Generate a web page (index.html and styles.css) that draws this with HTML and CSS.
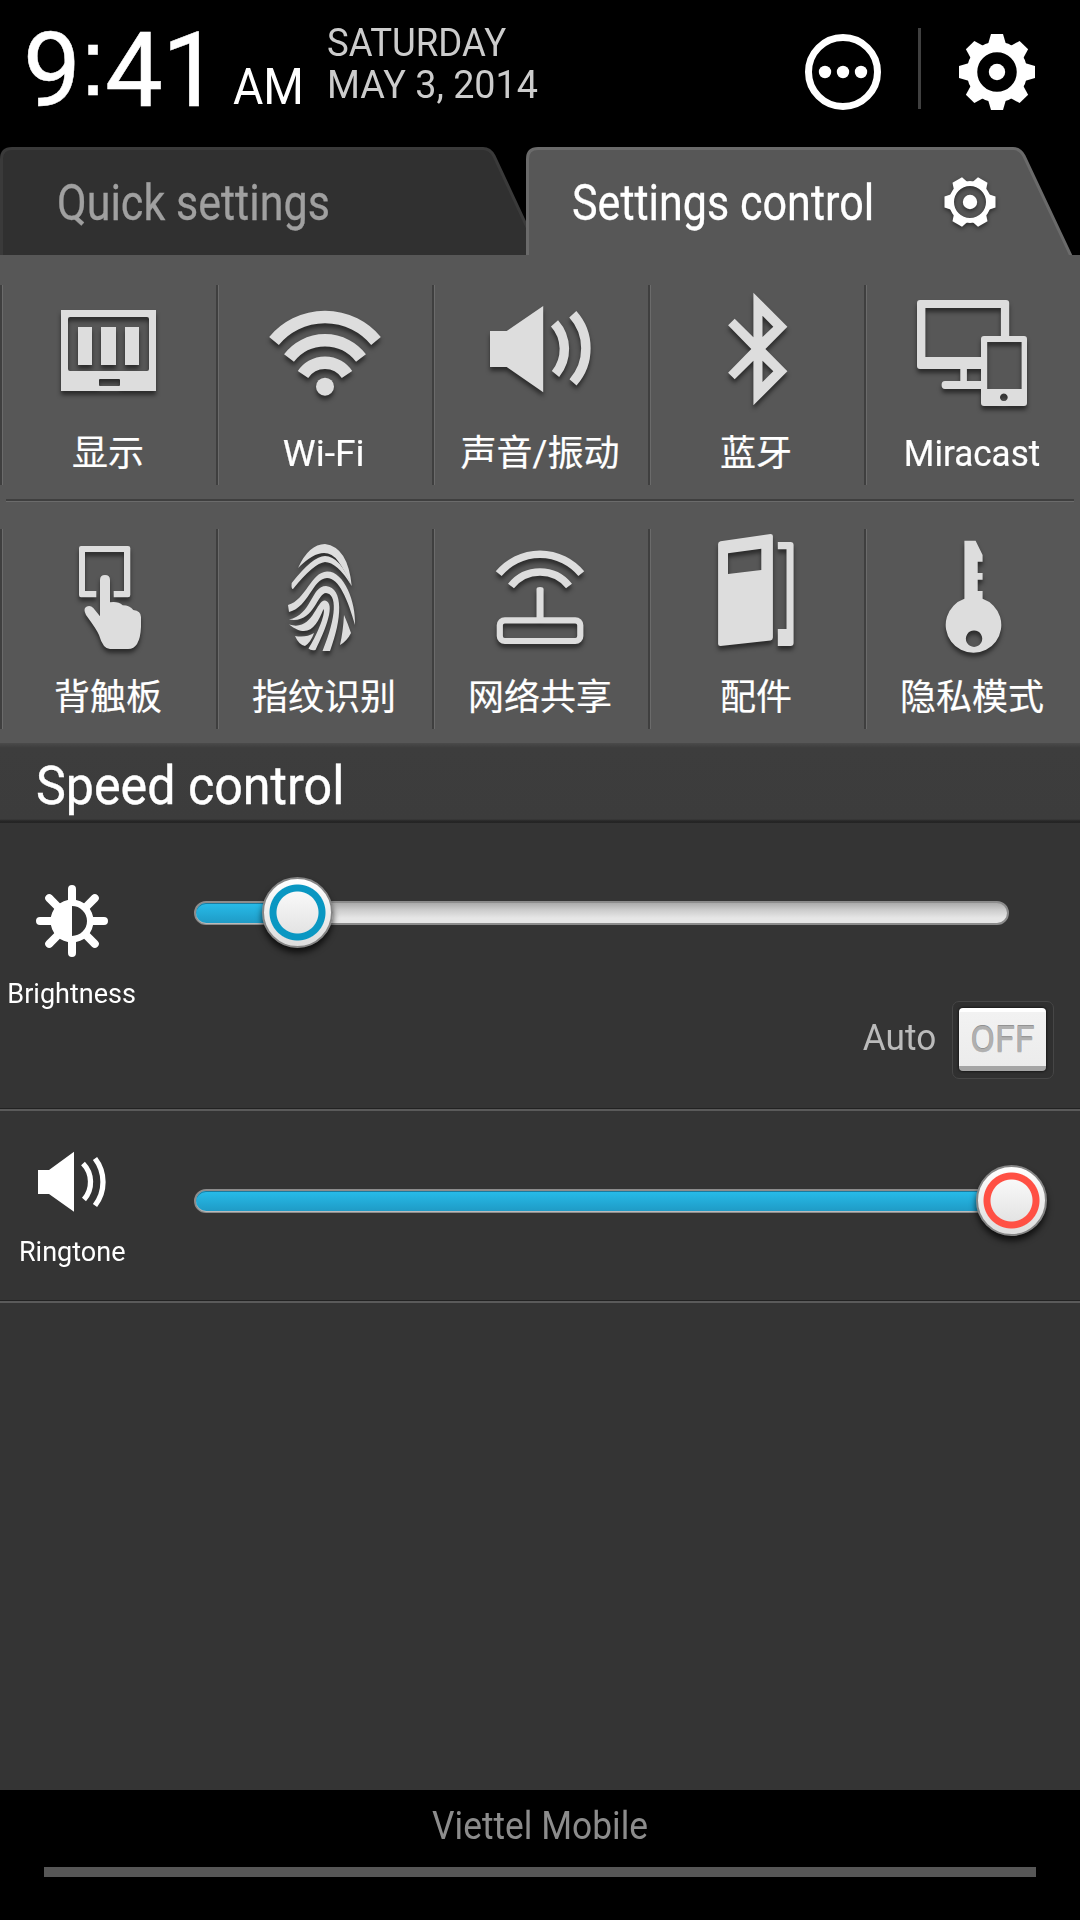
FILE: index.html
```html
<!DOCTYPE html>
<html lang="zh-CN">
<head>
  <meta charset="UTF-8">
  <title>Settings control</title>
  <meta name="viewport" content="width=device-width, initial-scale=1.0">
  <link rel="stylesheet" href="styles.css">
</head>
<body>
  <div class="screen">
    <header class="status">
      <span class="time">9<span class="colon">:</span>41</span>
      <span class="ampm">AM</span>
      <div class="date">
        <span class="day">SATURDAY</span>
        <span class="full-date">MAY 3, 2014</span>
      </div>
      <svg class="more" viewBox="-40 -40 80 80">
        <circle r="34.5" fill="none" stroke="#fff" stroke-width="7"/>
        <circle cx="-18" r="6.2"/><circle r="6.2"/><circle cx="18" r="6.2"/>
      </svg>
      <span class="divider"></span>
      <svg class="gear" viewBox="-40 -40 80 80">
        <defs><path id="tooth" d="M-9.5 -26 L-6 -38 H6 L9.5 -26Z"/></defs>
        <circle r="25" fill="none" stroke="#fff" stroke-width="10.5"/>
        <circle r="8.2"/>
        <use href="#tooth"/>
        <use href="#tooth" transform="rotate(45)"/>
        <use href="#tooth" transform="rotate(90)"/>
        <use href="#tooth" transform="rotate(135)"/>
        <use href="#tooth" transform="rotate(180)"/>
        <use href="#tooth" transform="rotate(225)"/>
        <use href="#tooth" transform="rotate(270)"/>
        <use href="#tooth" transform="rotate(315)"/>
      </svg>
    </header>

    <nav class="tabs">
      <div class="tab tab-quick">
        <svg class="tab-shape" viewBox="0 0 550 108">
          <path d="M1.5 110 V12 Q1.5 1.5 12 1.5 H483 Q490 1.5 494 9 L541 110" fill="#303030" stroke="#3a3a3a" stroke-width="3"/>
        </svg>
        <span class="tab-text">Quick settings</span>
      </div>
      <div class="tab tab-control">
        <svg class="tab-shape" viewBox="0 0 550 108">
          <path d="M1.5 110 V12 Q1.5 1.5 12 1.5 H487 Q494 1.5 498 9 L545.5 110" fill="#575757" stroke="#6a6a6a" stroke-width="3"/>
        </svg>
        <span class="tab-text">Settings control</span>
        <svg class="tab-gear" viewBox="-30 -30 60 60">
          <defs><path id="small-tooth" d="M-8 -18 L-5.5 -25.5 H5.5 L8 -18Z"/></defs>
          <circle r="18.5" fill="none" stroke="#fff" stroke-width="5"/>
          <circle r="7.2"/>
          <use href="#small-tooth" transform="rotate(30)"/>
          <use href="#small-tooth" transform="rotate(90)"/>
          <use href="#small-tooth" transform="rotate(150)"/>
          <use href="#small-tooth" transform="rotate(210)"/>
          <use href="#small-tooth" transform="rotate(270)"/>
          <use href="#small-tooth" transform="rotate(330)"/>
        </svg>
      </div>
    </nav>

    <main class="panel">
      <div class="row">
        <div class="cell">
          <svg class="icon" viewBox="0 0 120 120">
            <path fill-rule="evenodd" d="M13 20H108V101H13Z M22 27Q20 27 20 29V79Q20 81 22 81H99Q101 81 101 79V29Q101 27 99 27Z M52 89Q51 89 51 90V95Q51 96 52 96H71Q72 96 72 95V90Q72 89 71 89Z" class="display-frame"/>
            <path d="M30 37H44V75H30Z M53 37H68V75H53Z M77 37H91V75H77Z"/>
          </svg>
          <span class="label">显示</span>
        </div>
        <div class="cell">
          <svg class="icon" viewBox="0 0 120 120">
            <g class="line" stroke-width="12.5">
              <path d="M10 51A66.2 66.2 0 0 1 112 51"/>
              <path d="M25 68A45.5 45.5 0 0 1 97 68"/>
              <path d="M39 84.5A26.4 26.4 0 0 1 83 84.5"/>
            </g>
            <circle cx="61" cy="96.7" r="9"/>
          </svg>
          <span class="label label-wifi">Wi-Fi</span>
        </div>
        <div class="cell">
          <svg class="icon" viewBox="0 0 120 120">
            <path d="M10 41H26.7L63.2 16V102.3L26.7 77H10Z"/>
            <g class="line" stroke-width="9.5">
              <path d="M74.5 33.3A39 39 0 0 1 75.5 84"/>
              <path d="M92.8 24.3A51 51 0 0 1 93 92.3"/>
            </g>
          </svg>
          <span class="label">声音/振动</span>
        </div>
        <div class="cell">
          <svg class="icon" viewBox="0 0 120 120">
            <path fill-rule="evenodd" d="M57.4 2.7L91.4 36.7L69.4 59L91.4 81.3L57.4 115.3V70.7L38.7 89.3L32.1 82.7L55.3 59L32.1 35.3L38.7 28.7L57.4 47.3Z M66.5 25.7V47L77.3 36.7Z M66.5 70.7V92L77.3 81.3Z"/>
          </svg>
          <span class="label">蓝牙</span>
        </div>
        <div class="cell">
          <svg class="icon" viewBox="0 0 120 120">
            <path d="M8 10H94Q97.2 10 97.2 13V46H88.9V18H13.4V67H69V79H54.9V91H69V99H33Q29.6 99 29.6 95T33 91H48.3V79H8Q5 79 5 76V13Q5 10 8 10Z"/>
            <path fill-rule="evenodd" d="M72 46H112Q115 46 115 49V113Q115 116 112 116H72Q69 116 69 113V49Q69 46 72 46Z M75.2 52V99H109.6V52Z M91.8 103.5a3.8 3.8 0 1 0 .1 0Z"/>
          </svg>
          <span class="label label-cast">Miracast</span>
        </div>
      </div>
      <div class="rule"></div>
      <div class="row">
        <div class="cell">
          <svg class="icon" viewBox="0 0 120 120">
            <path d="M33 12H80Q82.3 12 82.3 14V61Q82.3 63.3 80 63.3H65.7V57H76V18H37V57H48.3V63.3H33Q31 63.3 31 61V14Q31 12 33 12Z"/>
            <path d="M52 82.3V46Q52 41 57 41T62 46V68.3Q70 67 74.7 71.3Q82 71.5 85.3 76Q93 77 93 83V93Q92 115 80 115H62Q55 115 51 101Q49 96 38 81Q35 75 38 73Q42 70.5 45.3 74Z"/>
          </svg>
          <span class="label">背触板</span>
        </div>
        <div class="cell">
          <svg class="icon" viewBox="0 0 120 120">
            <path d="M34 34Q45 10 61 10Q84 13 87.7 52Q80 35 74 27Q60 8 34 34Z"/>
            <path d="M27.7 49Q49 22 61 22Q76 22 87.7 52Q73 28 61 28Q50 29 29 55Q27 55 27.7 49Z"/>
            <path d="M24 71C42 66 47 38 63 37.5C80 37 92 68 91 91C84 66 75 44 63 44C48 45 45 73 25 78Z"/>
            <path d="M25 85.5C48 81 47 52 62 52C80 54 78 85 66 117H58.5C73 82 73 60 62 59C53 59 50 90 25 85.5Z"/>
            <path d="M25 90.5C49 98 52 66 61 66.5C72 69 62 95 51.5 116Q47 117 44.5 114.5C52 103 62 80 59.5 75C53 91 45 106 25 90.5Z"/>
            <path d="M31 102Q42 104 50 99Q47 108 41 112Q35 111 31 102Z"/>
            <path d="M80 81Q84 90 87 99Q83 107 76 111Q79 98 80 81Z"/>
          </svg>
          <span class="label">指纹识别</span>
        </div>
        <div class="cell">
          <svg class="icon" viewBox="0 0 120 120">
            <g class="line">
              <path stroke-width="7.6" d="M18.7 39.7A53.6 53.6 0 0 1 101.3 39.7"/>
              <path stroke-width="7.6" d="M31 52A37 37 0 0 1 89 52"/>
              <rect x="19.8" y="86.3" width="80.5" height="20.7" rx="5" stroke-width="6.2"/>
            </g>
            <path d="M56.5 86V55Q56.5 53 60 53T63.6 55V86Z"/>
          </svg>
          <span class="label">网络共享</span>
        </div>
        <div class="cell">
          <svg class="icon" viewBox="0 0 120 120">
            <path fill-rule="evenodd" d="M24.5 7.3L74.5 0Q76.9 0 76.9 2V103.5Q76.9 106 74.5 106.4L24.5 112Q22.1 112 22.1 110V10Q22.1 7.7 24.5 7.3Z M32 19.3V40L65.3 36V14.7Z"/>
            <path d="M81.8 8H94.5Q97.6 8 97.6 11V109Q97.6 112 94.5 112H81.8V95H90.5V15.3H81.8Z"/>
          </svg>
          <span class="label">配件</span>
        </div>
        <div class="cell">
          <svg class="icon" viewBox="0 0 120 120">
            <path fill-rule="evenodd" d="M52.4 6.7H63.6L70.6 21V27.7H65.7V39H70.6V45.7H65.7V57H70.6V64.7A27.8 27.8 0 1 1 52.4 64.7Z M62 96.5a8.2 8.2 0 1 0 .1 0Z"/>
          </svg>
          <span class="label">隐私模式</span>
        </div>
      </div>
    </main>

    <h1 class="section-title"><span>Speed control</span></h1>

    <section class="control control-brightness">
      <div class="control-name">
        <svg class="control-icon" viewBox="-40 -40 80 80">
          <path fill="none" stroke="#fff" stroke-width="8" stroke-linecap="round" d="M0 -32V-20M0 20V32M-32 0H-20M20 0H32M-22.8 -22.8L-14 -14M14 14L22.8 22.8M22.8 -22.8L14 -14M-14 14L-22.8 22.8"/>
          <path fill-rule="evenodd" d="M0 -21.5A21.5 21.5 0 0 1 0 21.5A21.5 21.5 0 0 1 0 -21.5Z M0 -15V15A15 15 0 0 0 0 -15Z"/>
        </svg>
        <span class="control-label">Brightness</span>
      </div>
      <div class="control-body">
        <div class="slider">
          <div class="fill" style="width: 102px"></div>
          <div class="thumb" style="left: 102px"></div>
        </div>
        <div class="auto">
          <span class="auto-label">Auto</span>
          <div class="toggle"><button class="toggle-btn">OFF</button></div>
        </div>
      </div>
    </section>

    <section class="control control-ringtone">
      <div class="control-name">
        <svg class="control-icon" viewBox="0 0 80 80">
          <path d="M6 28H17L42 9.7V69.7L17 52H6Z"/>
          <g fill="none" stroke="#fff" stroke-width="5.3">
            <path d="M51 21.5A26.6 26.6 0 0 1 52 57.5"/>
            <path d="M63 16.5A38.5 38.5 0 0 1 63 63.5"/>
          </g>
        </svg>
        <span class="control-label">Ringtone</span>
      </div>
      <div class="control-body">
        <div class="slider">
          <div class="fill" style="width: 815px"></div>
          <div class="thumb thumb-max" style="left: 816px"></div>
        </div>
      </div>
    </section>

    <footer class="carrier">
      <span class="carrier-name">Viettel Mobile</span>
      <div class="handle"></div>
    </footer>
  </div>
</body>
</html>
```
FILE: styles.css
```css
* {
  box-sizing: border-box;
}
body {
  margin: 0;
  background: #000;
  font-family: Roboto, "Noto Sans CJK SC", sans-serif;
  color: #fff;
}
.screen {
  width: 1080px;
  height: 1920px;
  display: flex;
  flex-direction: column;
  background: #343434;
  overflow: hidden;
}
svg {
  display: block;
  flex: none;
  fill: #fff;
}
span {
  white-space: nowrap;
}

/* status header */
.status {
  height: 147px;
  flex: none;
  display: flex;
  align-items: flex-start;
  background: #000;
  padding-left: 23px;
}
.time {
  width: 210px;
  height: 104px;
  margin-top: 16px;
  font-size: 103px;
  line-height: 104px;
  letter-spacing: -1px;
  -webkit-text-stroke: 0.5px #fff;
}
/* square dots, raised to the middle of the digits */
.colon {
  font-family: "Liberation Sans", sans-serif;
  font-size: 94px;
  line-height: 1;
  vertical-align: 11px;
}
.ampm {
  width: 93px;
  margin-top: 62px;
  font-size: 50px;
  line-height: 50px;
  transform: scaleX(0.93);
  transform-origin: left;
}
.date {
  width: 477px;
  margin: 22px -1px 0 1px;
  display: flex;
  flex-direction: column;
  align-items: flex-start;
  color: #ccc;
  font-size: 38.5px;
  line-height: 42px;
}
.day {
  transform: scaleX(0.95);
  transform-origin: left;
}
.full-date {
  transform: scaleX(0.98);
  transform-origin: left;
}
.more {
  width: 80px;
  height: 80px;
  margin-top: 32px;
}
.divider {
  width: 3px;
  height: 81px;
  margin: 28px 36px 0 35px;
  background: #404040;
}
.gear {
  width: 80px;
  height: 80px;
  margin-top: 32px;
}

/* tabs */
.tabs {
  height: 108px;
  flex: none;
  display: flex;
  background: #000;
}
.tab {
  position: relative;
  display: flex;
  align-items: flex-start;
}
.tab-quick {
  width: 526px;
  padding-left: 57px;
  color: #a0a0a0;
}
.tab-control {
  width: 554px;
  padding-left: 46px;
}
.tab-shape {
  position: absolute;
  left: 0;
  top: 0;
  width: 550px;
  height: 108px;
}
.tab-text {
  position: relative;
  margin-top: 26px;
  font-size: 50.5px;
  line-height: 60px;
  transform: scaleX(0.853);
  transform-origin: left;
  -webkit-text-stroke: 0.3px;
}
.tab-control .tab-text {
  width: 342px;
}
.tab-gear {
  position: relative;
  width: 60px;
  height: 60px;
  margin: 25px 0 0 26px;
  filter: drop-shadow(0 2px 2px rgba(0, 0, 0, 0.5));
}

/* icon grid */
.panel {
  height: 488px;
  flex: none;
  padding-top: 30px;
  background: #575757;
}
.row {
  height: 200px;
  display: grid;
  grid-template-columns: repeat(5, 216px);
}
.cell {
  display: flex;
  flex-direction: column;
  align-items: center;
  padding-top: 5px;
  background: linear-gradient(90deg, #3f3f3f 2px, #6b6b6b 2px, #6b6b6b 3px, transparent 3px);
}
.icon {
  width: 120px;
  height: 120px;
  fill: #ddd;
  overflow: visible;
  filter: drop-shadow(0 4px 2px rgba(0, 0, 0, 0.5));
}
.line {
  fill: none;
  stroke: #ddd;
}
.label {
  margin-top: 17px;
  font-size: 36px;
  line-height: 54px;
  -webkit-text-stroke: 0.2px #fff;
}
.label-wifi {
  transform: scale(1.03);
}
.label-cast {
  transform: scale(0.975, 1.03);
}
.rule {
  height: 3px;
  margin: 14px 6px 27px;
  background: linear-gradient(#3f3f3f 2px, #6b6b6b 2px);
}

/* sliders */
.section-title {
  height: 80px;
  flex: none;
  margin: 0;
  padding: 12px 0 0 36px;
  font-size: 53px;
  font-weight: 400;
  line-height: 62px;
  background: linear-gradient(#4a4a4a, #3d3d3d 5px, #3c3c3c 76px, #262626 78px, #242424);
}
.section-title span {
  display: inline-block;
  transform: scaleX(0.947);
  transform-origin: left;
  -webkit-text-stroke: 0.4px #fff;
}
.control {
  flex: none;
  display: flex;
  border-bottom: 2px solid #5a5a5a;
  box-shadow: inset 0 -1px #222;
}
.control-brightness {
  height: 288px;
}
.control-ringtone {
  height: 192px;
}
.control-name {
  width: 144px;
  display: flex;
  flex-direction: column;
  align-items: center;
  padding-top: 58px;
}
.control-ringtone .control-name {
  padding-top: 31px;
}
.control-icon {
  width: 80px;
  height: 80px;
}
.control-label {
  margin-top: 16px;
  font-size: 28px;
  line-height: 34px;
  transform: scaleX(0.965);
}
.control-ringtone .control-label {
  margin-top: 13px;
}
.control-body {
  flex: 1;
  padding: 78px 26px 0 50px;
}
.slider {
  position: relative;
  width: 815px;
  height: 24px;
  border: 2px solid #8c8c8c;
  border-radius: 12px;
  background: linear-gradient(#aaa, #ccc 35%, #e6e6e6 75%, #e6e6e6);
}
.fill {
  height: 20px;
  max-width: 100%;
  border-radius: 10px 0 0 10px;
  background: linear-gradient(#27bcea, #1f9bc6);
  box-shadow: inset 0 1px #187ba0, 0 1px #bbb;
}
.thumb {
  position: absolute;
  top: 9px;
  width: 71px;
  height: 71px;
  margin: -35px 0 0 -36px;
  border: 2px solid #858585;
  border-radius: 50%;
  background:
    radial-gradient(circle, transparent 20.5px, #0a97c2 21.5px, #0a97c2 27.5px, transparent 28.5px),
    linear-gradient(#fff, #ddd);
  box-shadow: 0 5px 6px rgba(0, 0, 0, 0.7);
}
.thumb-max {
  background:
    radial-gradient(circle, transparent 20.5px, #ff5044 21.5px, #ff5044 27.5px, transparent 28.5px),
    linear-gradient(#fff, #ddd);
}
.auto {
  display: flex;
  justify-content: flex-end;
  align-items: flex-start;
  margin-top: 76px;
}
.auto-label {
  margin: 15px 16px 0 0;
  font-size: 37px;
  line-height: 44px;
  color: #bbb;
  transform: scaleX(0.95);
  transform-origin: right;
}
.toggle {
  width: 102px;
  height: 78px;
  padding: 6px;
  border: 1px solid #464646;
  border-radius: 7px;
  background: #303030;
}
.toggle-btn {
  display: block;
  width: 87px;
  height: 63px;
  padding: 0;
  border: 0;
  border-radius: 4px;
  font: 400 36px/62px Roboto, sans-serif;
  color: #b0b0b0;
  -webkit-text-stroke: 0.4px #b0b0b0;
  text-shadow: 0 -1px #888;
  background: linear-gradient(#fff 4px, #f2f2f2 4px, #ececec 58px, #a5a5a5 58px);
  box-shadow: 0 0 3px #000;
}

/* carrier bar */
.carrier {
  height: 130px;
  flex: none;
  margin-top: auto;
  display: flex;
  flex-direction: column;
  align-items: center;
  background: #000;
}
.carrier-name {
  margin-top: 14px;
  font-size: 38px;
  line-height: 44px;
  color: #8c8c8c;
  transform: scaleX(0.93);
}
.handle {
  width: 992px;
  height: 10px;
  margin-top: 19px;
  background: #575757;
}
```
